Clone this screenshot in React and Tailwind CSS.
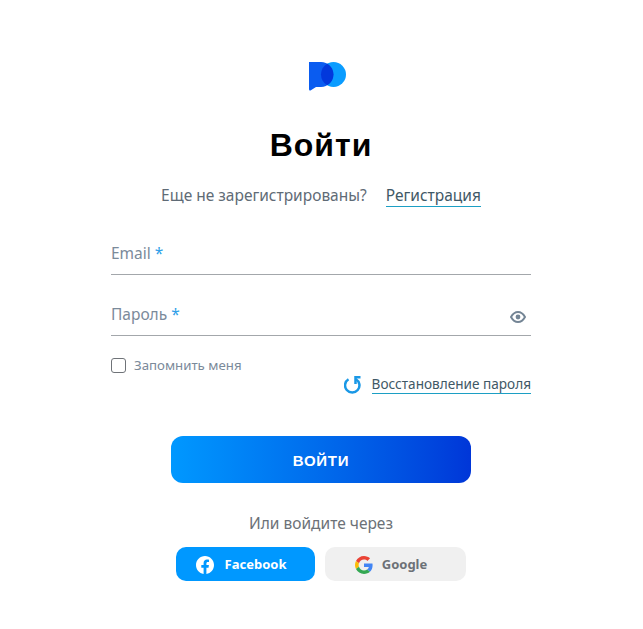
import React from 'react';

const Logo = () => (
  <svg width="38" height="30" viewBox="0 0 38 30">
    <circle cx="24.5" cy="13.5" r="12.5" fill="#0a9cff" />
    <path d="M0 1 H12 A12.5 12.5 0 0 1 12 26 H7 L1.5 29.5 Q0 30 0 28 Z" fill="#0a5cf0" />
    <path d="M18.2 2.700 A12.500 12.500 0 0 1 18.2 24.300 A12.500 12.500 0 0 1 18.2 2.700 Z" fill="#0238dc" />
  </svg>
);

const EyeIcon = () => (
  <svg className="absolute right-[5px] top-[16px]" width="16" height="12" viewBox="0 0 16 12">
    <path d="M1 6 C3 2.500 5.500 1 8 1 C10.500 1 13 2.500 15 6 C13 9.500 10.500 11 8 11 C5.500 11 3 9.500 1 6 Z" fill="none" stroke="#748595" strokeWidth="2" />
    <circle cx="8" cy="6" r="2.400" fill="#748595" />
  </svg>
);

const RefreshIcon = () => (
  <svg width="17" height="19" viewBox="0 0 17 19" fill="none" stroke="#1a98e6" strokeWidth="2.500">
    <path d="M4.500 4.200 A7.200 7.200 0 1 0 12 4.200" />
    <path d="M11.500 9 V2.200 H16.500" />
  </svg>
);

const GoogleIcon = () => (
  <svg width="18" height="18" viewBox="0 0 48 48">
    <path fill="#EA4335" d="M24 9.5c3.5 0 6.700 1.200 9.200 3.600l6.900-6.900C35.900 2.400 30.400 0 24 0 14.600 0 6.500 5.400 2.600 13.200l8 6.200C12.500 13.700 17.800 9.500 24 9.500z" />
    <path fill="#4285F4" d="M46.900 24.500c0-1.600-.1-3.100-.4-4.500H24v9h12.900c-.6 3-2.200 5.500-4.700 7.200l7.700 6c4.500-4.200 7-10.300 7-17.700z" />
    <path fill="#FBBC05" d="M10.500 28.600c-.5-1.500-.8-3-.8-4.600s.3-3.100.8-4.600l-8-6.200C.9 16.500 0 20.100 0 24s.9 7.500 2.600 10.800l7.900-6.200z" />
    <path fill="#34A853" d="M24 48c6.500 0 11.900-2.100 15.900-5.800l-7.700-6c-2.200 1.400-4.900 2.300-8.200 2.300-6.200 0-11.500-4.200-13.400-9.900l-8 6.200C6.500 42.600 14.600 48 24 48z" />
  </svg>
);

const FacebookIcon = () => (
  <svg width="18" height="18" viewBox="0 0 24 24" fill="#fff">
    <path d="M24 12.070C24 5.400 18.630 0 12 0S0 5.400 0 12.070c0 6.030 4.390 11.020 10.130 11.930v-8.440H7.080v-3.490h3.050V9.410c0-3.030 1.790-4.700 4.530-4.700 1.310 0 2.690.24 2.690.24v2.970h-1.510c-1.490 0-1.960.93-1.960 1.880v2.270h3.330l-.53 3.490h-2.800V24C19.610 23.090 24 18.100 24 12.070z" />
  </svg>
);

const Field = ({ label, children }) => (
  <div className="relative h-[41px] pt-[7px] border-b border-[#a3a7ab]">
    <span className="text-[15.500px] leading-5 text-[#7b8a9a]">
      {label} <span className="text-[#2f9fe8]">*</span>
    </span>
    {children}
  </div>
);

export default function App() {
  return (
    <div className="min-h-[629px] bg-white flex flex-col items-center pt-[61px] pr-px font-['Noto_Sans',sans-serif]">
      <div className="ml-[13px]">
        <Logo />
      </div>

      <h1 className="mt-[30px] text-[32px] leading-[48px] font-bold tracking-[1px] text-black font-['Liberation_Sans',sans-serif]">
        Войти
      </h1>

      <div className="mt-[16px] flex items-start gap-[19px] text-[15.500px] leading-5">
        <span className="text-[#5f6b76]">Еще не зарегистрированы?</span>
        <a className="pb-[1px] border-b border-[#1c9fc4] text-[#3f5866]">Регистрация</a>
      </div>

      <div className="mt-[27px] w-[420px]">
        <Field label="Email" />
        <div className="mt-5">
          <Field label="Пароль">
            <EyeIcon />
          </Field>
        </div>

        <label className="mt-[20px] flex items-center gap-[8px]">
          <span className="w-[15px] h-[15px] rounded-[3px] border border-[#6f7378] bg-white" />
          <span className="text-[13.250px] leading-[18px] text-[#7b8a9a]">Запомнить меня</span>
        </label>

        <div className="flex justify-end items-center gap-[11px]">
          <RefreshIcon />
          <a className="inline-block border-b border-[#1c9fc4] text-[13.600px] leading-[19px] text-[#3f5866]">Восстановление пароля</a>
        </div>
      </div>

      <button className="mt-[42px] w-[300px] h-[47px] pt-[3px] rounded-[12px] bg-gradient-to-r from-[#0098ff] to-[#0036d8] text-white text-[15px] font-bold tracking-[0.7px] font-['Liberation_Sans',sans-serif]">
        ВОЙТИ
      </button>

      <p className="mt-[30px] text-[15.500px] leading-5 text-[#6c7177]">Или войдите через</p>

      <div className="mt-[14px] flex gap-[10px]">
        <button className="w-[139px] h-[34px] pr-[9px] pt-px rounded-[10px] bg-[#0098ff] text-white flex items-center justify-center gap-[11px] text-[13px] font-bold">
          <FacebookIcon />
          Facebook
        </button>
        <button className="w-[141px] h-[34px] pr-[9px] pt-px rounded-[10px] bg-[#f0f0f0] text-[#6c7177] flex items-center justify-center gap-[9px] text-[13px] font-bold">
          <GoogleIcon />
          Google
        </button>
      </div>
    </div>
  );
}
